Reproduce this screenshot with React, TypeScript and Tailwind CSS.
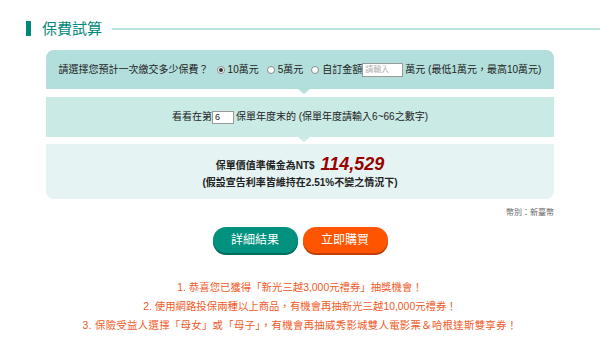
import React from "react";

const font = { fontFamily: '"Liberation Sans", "Noto Sans CJK TC", sans-serif' };

function Radio({ checked }: { checked?: boolean }) {
  return (
    <span className="inline-flex items-center justify-center w-[8px] h-[8px] rounded-full border border-[#8a8a8a] bg-white mr-[3px]">
      {checked ? <span className="w-[4px] h-[4px] rounded-full bg-[#333]" /> : null}
    </span>
  );
}

function Arrow({ color }: { color: string }) {
  return (
    <span
      className={`absolute left-[252px] top-full w-0 h-0 border-l-[6px] border-r-[6px] border-t-[5px] border-l-transparent border-r-transparent ${color}`}
    />
  );
}

export default function App() {
  return (
    <div className="w-[600px] h-[364px] bg-white overflow-hidden text-[#222]" style={font}>
      <div className="flex items-center pt-[20px] pl-[26px] h-[37px]">
        <div className="w-[5px] h-[15px] bg-[#00897b]" />
        <div className="ml-[11px] text-[15px] leading-none text-[#00897b]">保費試算</div>
        <div className="ml-[10px] flex-1 h-[2px] bg-[#b7e2dd]" />
      </div>

      <div className="mx-[46px] mt-[13px]">
        <div className="relative h-[39px] rounded-t-[8px] bg-[#b2dfdb] flex items-center justify-center text-[10px] leading-none">
          <span>請選擇您預計一次繳交多少保費？</span>
          <span className="ml-[8px] inline-flex items-center"><Radio checked />10萬元</span>
          <span className="ml-[8px] inline-flex items-center"><Radio />5萬元</span>
          <span className="ml-[8px] inline-flex items-center">
            <Radio />自訂金額
            <span className="inline-flex items-center w-[41px] h-[14px] bg-white border border-[#9a9a9a] text-[8px] text-[#b0b0b0] pl-[2px]">請輸入</span>
            <span className="ml-[2px]">萬元 (最低1萬元，最高10萬元)</span>
          </span>
          <Arrow color="border-t-[#b2dfdb]" />
        </div>

        <div className="relative mt-[8px] h-[40px] bg-[#c9eae5] flex items-center justify-center text-[10px] leading-none">
          <span>看看在第</span>
          <span className="inline-flex items-center w-[22px] h-[13px] bg-white border border-[#9a9a9a] text-[9px] pl-[2px]">6</span>
          <span className="ml-[2px]">保單年度末的 (保單年度請輸入6~66之數字)</span>
          <Arrow color="border-t-[#c9eae5]" />
        </div>

        <div className="mt-[7px] h-[55px] rounded-b-[8px] bg-[#e5f4f3] flex flex-col items-center justify-center font-bold text-[10px] leading-none">
          <div className="flex items-end">
            <span className="mb-[2px]">保單價值準備金為NT$</span>
            <span className="ml-[6px] text-[18px] italic text-[#990000] leading-none">114,529</span>
          </div>
          <div className="mt-[5px]">(假設宣告利率皆維持在2.51%不變之情況下)</div>
        </div>

        <div className="mt-[9px] text-right text-[8px] leading-[10px] text-[#666]">幣別：新臺幣</div>

        <div className="mt-[9px] flex justify-center gap-[5px]">
          <div className="w-[85px] h-[26px] rounded-full bg-[#00917f] shadow-[0_2px_0_#006a5c] flex items-center justify-center text-white text-[12px]">詳細結果</div>
          <div className="w-[85px] h-[26px] rounded-full bg-[#ff5500] shadow-[0_2px_0_#c23d00] flex items-center justify-center text-white text-[12px]">立即購買</div>
        </div>
      </div>

      <div className="mt-[25px] flex flex-col items-center text-[10.4px] leading-[19px] text-[#f05a28]">
        <div>1. 恭喜您已獲得「新光三越3,000元禮券」抽獎機會！</div>
        <div>2. 使用網路投保兩種以上商品，有機會再抽新光三越10,000元禮券！</div>
        <div className="tracking-[0.3px]">3. 保險受益人選擇「母女」或「母子」，有機會再抽威秀影城雙人電影票＆哈根達斯雙享券！</div>
      </div>
    </div>
  );
}
